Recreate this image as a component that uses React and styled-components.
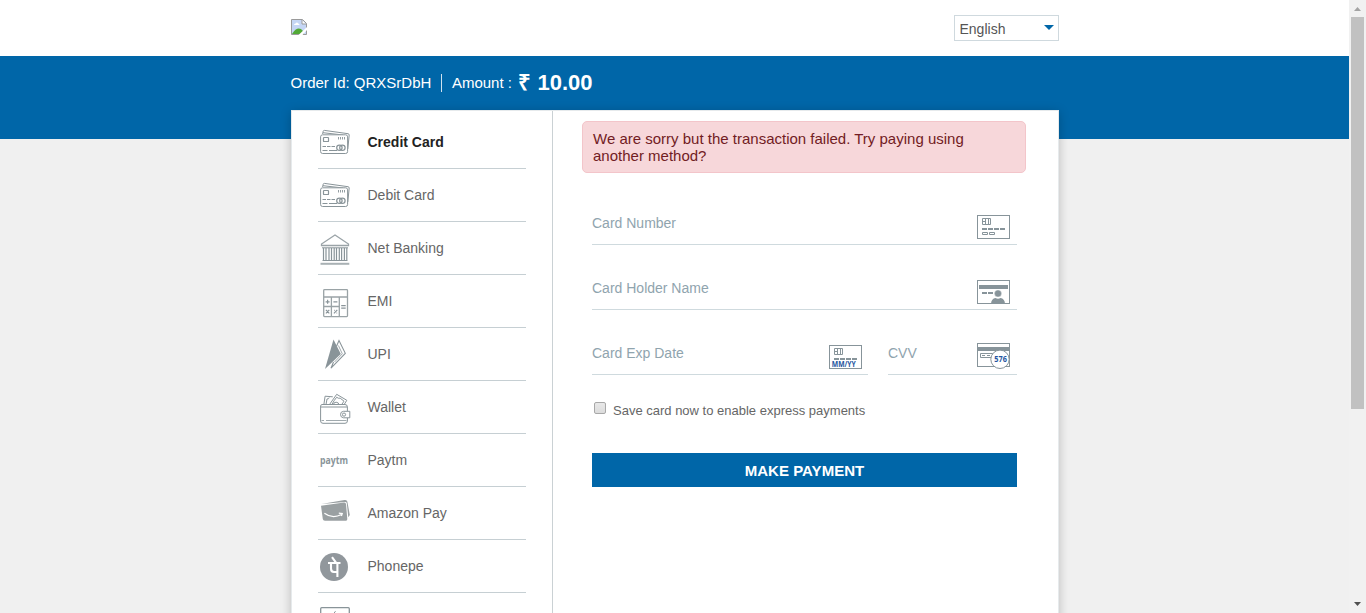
import React from 'react';
import styled, { createGlobalStyle } from 'styled-components';

const BLUE = '#0066a8';
const GREY = '#899499';

const GlobalStyle = createGlobalStyle`
  * { box-sizing: border-box; }
  body { margin: 0; overflow: hidden; background: #f0f0f0; font-family: "Liberation Sans", Arial, sans-serif; color: #666; }
`;

const Window = styled.div`display: flex; height: 613px; overflow: hidden;`;
const Page = styled.div`flex: 1; min-width: 0; height: 613px; overflow: hidden;`;
const Container = styled.div`width: 768px; margin: 0 auto; position: relative; left: 0.5px;`;

const Header = styled.header`height: 56px; background: #fff;`;
const HeaderRow = styled(Container)`display: flex; justify-content: space-between; align-items: flex-start; padding-top: 15px;`;
const BrokenImage = styled.svg`margin-top: 4px; width: 16px; height: 16px;`;
const LanguageSelect = styled.div`
  width: 105px; height: 26px; border: 1px solid #cfd9de; padding: 2px 4px 0 4.5px;
  display: flex; justify-content: space-between; align-items: center;
  font-size: 14px; color: #555;
`;
const Caret = styled.span`
  border: 5px solid transparent; border-top-color: ${BLUE}; border-bottom: 0; margin-top: -3px;
`;

const OrderBar = styled.section`height: 83px; background: ${BLUE};`;
const OrderRow = styled(Container)`
  display: flex; align-items: center; height: 54px; padding-bottom: 1px; margin-left: 290px; left: 0.5px;
  color: #fff; font-size: 15px;
`;
const OrderText = styled.span`white-space: nowrap; padding-bottom: 1px;`;
const Divider = styled.i`width: 1px; height: 18px; background: #cfe2ef; margin: 0 10px 0 9.5px;`;
const Price = styled.strong`font-size: 22px; margin-left: 6.5px; padding-bottom: 3px; white-space: nowrap;`;

const Card = styled(Container)`
  display: flex; margin-top: -29px; height: 700px; background: #fff;
  border: 1px solid #e6eaec; border-bottom: 0; box-shadow: 0 2px 10px rgba(0, 0, 0, 0.22);
`;
const Sidebar = styled.nav`width: 261px; padding: 5px 26px 0; border-right: 1px solid #cad1d4;`;
const Method = styled.div`
  height: 53px; border-bottom: 1px solid #c6cfd3; display: flex; align-items: center;
  font-size: 14px; font-weight: ${p => (p.$active ? 700 : 400)}; color: ${p => (p.$active ? '#222' : '#666')};
`;
const MethodIcon = styled.svg`
  width: 36px; height: 40px; margin-right: 13.5px; overflow: visible; fill: none; stroke: ${GREY}; stroke-width: 1;
`;

const Content = styled.main`flex: 1; padding: 10px 32px 0 29px;`;
const Alert = styled.div`
  height: 52px; padding: 8px 10px; border: 1px solid #f3c5ca; border-radius: 5px; background: #f7d7da;
  color: #721c24; font-size: 15px; line-height: 17px;
`;
const Form = styled.form`padding: 7px 9px 0 10px;`;
const FieldRow = styled.div`display: flex; gap: 20px;`;
const Field = styled.label`
  width: ${p => p.$width || '425px'}; height: 65px; border-bottom: 1px solid #cfdade; padding-right: ${p => p.$right || '7px'};
  display: flex; justify-content: space-between; align-items: flex-end; color: #90a4ae; font-size: 14px;
`;
const FieldLabel = styled.span`line-height: 16px; margin-bottom: 13px;`;
const FieldIcon = styled.svg`
  width: 33px; height: 26px; margin-bottom: 5px; overflow: visible; fill: none; stroke: #87949a;
`;
const SaveRow = styled.label`
  display: flex; align-items: center; gap: 7px; height: 20px; margin: 25px 0 0 2px; font-size: 13px; white-space: nowrap;
`;
const Box = styled.span`
  width: 12px; height: 12px; margin-bottom: 4px; border: 1px solid #a8a8a8; border-radius: 2px;
  background: linear-gradient(#e8e8e8, #dcdcdc);
`;
const PayButton = styled.button`
  display: block; width: 425px; height: 34px; margin-top: 33px; padding: 0; border: 0; background: ${BLUE};
  color: #fff; font: 700 15px "Liberation Sans", Arial, sans-serif; letter-spacing: 0.03px;
`;

const Scrollbar = styled.div`
  width: 17px; height: 613px; background: #f1f1f1; display: flex; flex-direction: column; align-items: center;
`;
const Arrow = styled.svg`width: 17px; height: 17px; fill: ${p => p.$color};`;
const Thumb = styled.div`width: 13px; height: 392px; background: #c1c1c1; margin-bottom: auto;`;

const CardsArt = () => (
  <>
    <path d="M4.6 12 5.2 9.2Q5.5 8.2 6.5 8.4L30 11.7Q31.3 12 31.2 13L29.8 27M5 10.7 25 13" />
    <rect x="2.6" y="12.8" width="27" height="18.7" rx="2" fill="#fff" />
    <rect x="5.5" y="15.5" width="5" height="4" rx=".6" strokeWidth="1.2" />
    <path d="M20.5 15v2.5M22.5 15v2.5M24.5 15v2.5M26.5 15v2.5" strokeWidth=".9" />
    <path d="M4.5 24.5H17" strokeDasharray="3.5 1" />
    <path d="M4.5 28.5h5M11 28.5h8" />
    <circle cx="21.4" cy="25.8" r="2.7" strokeWidth="1.2" /><circle cx="24.4" cy="25.8" r="2.7" strokeWidth="1.2" />
  </>
);

const BankArt = () => (
  <>
    <path d="M3.5 17.5V16L17 7 30.5 16v1.5Z" strokeWidth="1.3" stroke="#9aa3a7" />
    <path d="M4 19.8H30M4.5 32.5H29.5" />
    <path d="M2.5 35.8H31.3" strokeWidth="2" stroke="#a9b1b4" />
    <path d="M5.5 20V32M8 20V32M11 20V32M13.5 20V32M16.2 20V32M18.5 20V32M21.3 20V32M23.6 20V32M26.4 20V32M28.8 20V32" strokeWidth="1.2" />
  </>
);

const CalculatorArt = () => (
  <>
    <g stroke="#9aa3a6">
      <rect x="5.7" y="8.6" width="23.8" height="27" rx=".8" strokeWidth="1.3" />
      <path d="M6 16H29M13.4 16V35.5M21.3 16V35.5M6 25.5H21" strokeWidth="1.3" />
    </g>
    <path d="M7.6 20.8h4M9.6 18.8v4M15.4 20.8h4M23.2 24.7h4.5M23.2 27.2h4.5M7.9 28.9l3.4 3.4M11.3 28.9l-3.4 3.4M15.9 32.4l3.4-3.6" strokeWidth="1.2" />
    <path d="M16.2 29.3h.8M18.4 32h.8" />
  </>
);

const UpiArt = () => (
  <>
    <path d="M18.5 12.2 21 6.6 27.3 19.3 13 34.2 15.5 28" strokeWidth="1.1" />
    <path d="M20.4 11.5 24.3 19.8 16.5 28" strokeWidth=".8" />
    <path d="M15.5 5.5 22.8 20 7 35Z" fill={GREY} stroke="none" />
  </>
);

const WalletArt = () => (
  <>
    <path d="M5.8 18 7.1 9.2 14.8 9.8M8.1 17 9 12Q11 12 11.2 10.5" />
    <path d="M11.5 17.5 18.7 7.3 28.8 13.3 25.9 18M14.2 17Q15.6 14 18.7 10.2Q20 11.7 22.2 11.2L26 14.2 23.5 17.8" />
    <path d="M15.4 18Q15.4 15.2 18.1 15.2T21 18" />
    <path d="M5 17.4Q2.6 17.3 2.6 19V34Q2.6 36.3 5 36.3H27Q29.4 36.3 29.4 34V31M29.4 24V20Q29.4 17.5 27 17.5H5" />
    <path d="M3 20H29" />
    <path d="M3.5 33.5H6M8 33.5H28.5" strokeWidth=".8" />
    <path d="M31.8 24.3H25.5Q22.5 24.5 22.5 27.5T25.5 30.8H31.8Z" fill="#fff" /><circle cx="26" cy="27.6" r="1.6" />
  </>
);

const PaytmArt = () => (
  <text x="2" y="23.8" fill={GREY} stroke="none"
    fontFamily="Open Sans, Roboto, sans-serif" fontWeight="700" fontSize="10" textLength="28" lengthAdjust="spacingAndGlyphs">paytm</text>
);

const AmazonArt = () => (
  <>
    <path d="M3.5 11 26.5 7.1Q29 6.7 29.4 8.7L31.8 22 30.3 24.3 28.8 10.2Q28.5 8.7 27 9Z" fill="#9aa0a2" stroke="none" />
    <path d="M3 12.8 26 9.5Q27.8 9.3 28 11L29.3 26Q29.3 27.7 28 27.7H7Q5 27.7 4.8 25.9Z" fill="#9aa0a2" stroke="none" />
    <path d="M6.4 20.2Q14.3 26.2 23.5 21.5M20.8 20.2 24.2 20.5 23.4 23" stroke="#fff" strokeWidth="1.3" />
  </>
);

const PhonepeArt = () => (
  <>
    <circle cx="16" cy="21" r="14" fill="#91979c" stroke="none" />
    <path d="M10 17H22.5M13 17V22.5Q13 26 16 26H19.4M19.4 17V31M14 11.2 18 16.7" stroke="#fff" strokeWidth="2.1" />
  </>
);

const QrArt = () => (
  <>
    <rect x="2.7" y="8.7" width="28.6" height="24" rx="1" strokeWidth="1.3" />
    <path d="M17.5 12.2 15.8 14.5" />
  </>
);

const methods = [
  ['Credit Card', CardsArt, true], ['Debit Card', CardsArt], ['Net Banking', BankArt], ['EMI', CalculatorArt],
  ['UPI', UpiArt], ['Wallet', WalletArt], ['Paytm', PaytmArt], ['Amazon Pay', AmazonArt], ['Phonepe', PhonepeArt], ['', QrArt],
];

const ChipArt = () => (
  <>
    <rect x=".5" y="2.5" width="32" height="23" />
    <path d="M5.5 5.5h8v6h-8zM8.5 5.5v6M11.5 5.5v6M5.5 8.5h3" />
    <path d="M5 16H28" strokeWidth="2" strokeDasharray="5 1" />
  </>
);

export default function App() {
  return (
    <>
      <GlobalStyle />
      <Window>
        <Page>
          <Header>
            <HeaderRow>
              <BrokenImage viewBox="0 0 16 16">
                <path d="M.5 15.5V.5H11.5L15.5 4.5V15.5Z" fill="#c5d6f5" stroke="#9a9a9a" />
                <path d="M11 1v4h4" fill="#fff" stroke="#9a9a9a" />
                <path d="M3 6Q3 4.5 4.5 4.5Q6 2.5 7.2 4.5Q8.5 4.5 8.5 6Z" fill="#fff" />
                <path d="M1 15Q7 6 12 12L13 15Z" fill="#52a936" />
                <path d="M7.5 16 16 8V11L11.5 16Z" fill="#fff" />
              </BrokenImage>
              <LanguageSelect>English<Caret /></LanguageSelect>
            </HeaderRow>
          </Header>
          <OrderBar>
            <OrderRow>
              <OrderText>Order Id: QRXSrDbH</OrderText>
              <Divider />
              <OrderText>Amount :</OrderText>
              <Price>₹ 10.00</Price>
            </OrderRow>
          </OrderBar>
          <Card>
            <Sidebar>
              {methods.map(([name, Art, active], i) => (
                <Method key={i} $active={active}>
                  <MethodIcon viewBox="0 0 36 40"><Art /></MethodIcon>
                  {name}
                </Method>
              ))}
            </Sidebar>
            <Content>
              <Alert>We are sorry but the transaction failed. Try paying using another method?</Alert>
              <Form>
                <Field>
                  <FieldLabel>Card Number</FieldLabel>
                  <FieldIcon viewBox="0 0 33 26">
                    <ChipArt /><path d="M5.5 19.5h5v2h-5zM12.5 19.5h5v2h-5z" />
                  </FieldIcon>
                </Field>
                <Field>
                  <FieldLabel>Card Holder Name</FieldLabel>
                  <FieldIcon viewBox="0 0 33 26">
                    <rect x=".5" y="2.5" width="32" height="23" />
                    <path d="M2 9H31" strokeWidth="4" />
                    <path d="M5 15h5M11 15h5" strokeWidth="2" />
                    <circle cx="21" cy="15.5" r="3.6" fill="#87949a" stroke="#fff" strokeWidth=".4" />
                    <path d="M14 25.5Q14.5 20.5 18.5 20Q21 21.5 23.5 20Q27.5 20.5 28 25.5Z" fill="#87949a" stroke="none" />
                  </FieldIcon>
                </Field>
                <FieldRow>
                  <Field $width="276px" $right="6px">
                    <FieldLabel>Card Exp Date</FieldLabel>
                    <FieldIcon viewBox="0 0 33 26">
                      <ChipArt />
                      <text x="2.8" y="23.8" textLength="24" lengthAdjust="spacingAndGlyphs" fill="#2555a0" stroke="none"
                        fontFamily="Open Sans, sans-serif" fontWeight="700" fontSize="8">MM/YY</text>
                    </FieldIcon>
                  </Field>
                  <Field $width="129px">
                    <FieldLabel>CVV</FieldLabel>
                    <FieldIcon viewBox="0 0 33 26">
                      <rect x=".5" y=".5" width="32" height="23" />
                      <path d="M1 6H32" strokeWidth="4" />
                      <path d="M3.5 10.5h12v4h-12zM5 12.5h3M10 12.5h3" />
                      <circle cx="23" cy="16.3" r="9.2" fill="#fff" />
                      <text x="17.3" y="18.8" textLength="12.6" lengthAdjust="spacingAndGlyphs" fill="#2555a0" stroke="none"
                        fontFamily="Open Sans, sans-serif" fontWeight="700" fontSize="8">576</text>
                    </FieldIcon>
                  </Field>
                </FieldRow>
                <SaveRow><Box /><span>Save card now to enable express payments</span></SaveRow>
                <PayButton type="button">MAKE PAYMENT</PayButton>
              </Form>
            </Content>
          </Card>
        </Page>
        <Scrollbar>
          <Arrow viewBox="0 0 17 17" $color="#a3a3a3"><path d="M5 11 8.5 7 12 11Z" /></Arrow>
          <Thumb />
          <Arrow viewBox="0 0 17 17" $color="#505050"><path d="M5 6 8.5 10 12 6Z" /></Arrow>
        </Scrollbar>
      </Window>
    </>
  );
}
